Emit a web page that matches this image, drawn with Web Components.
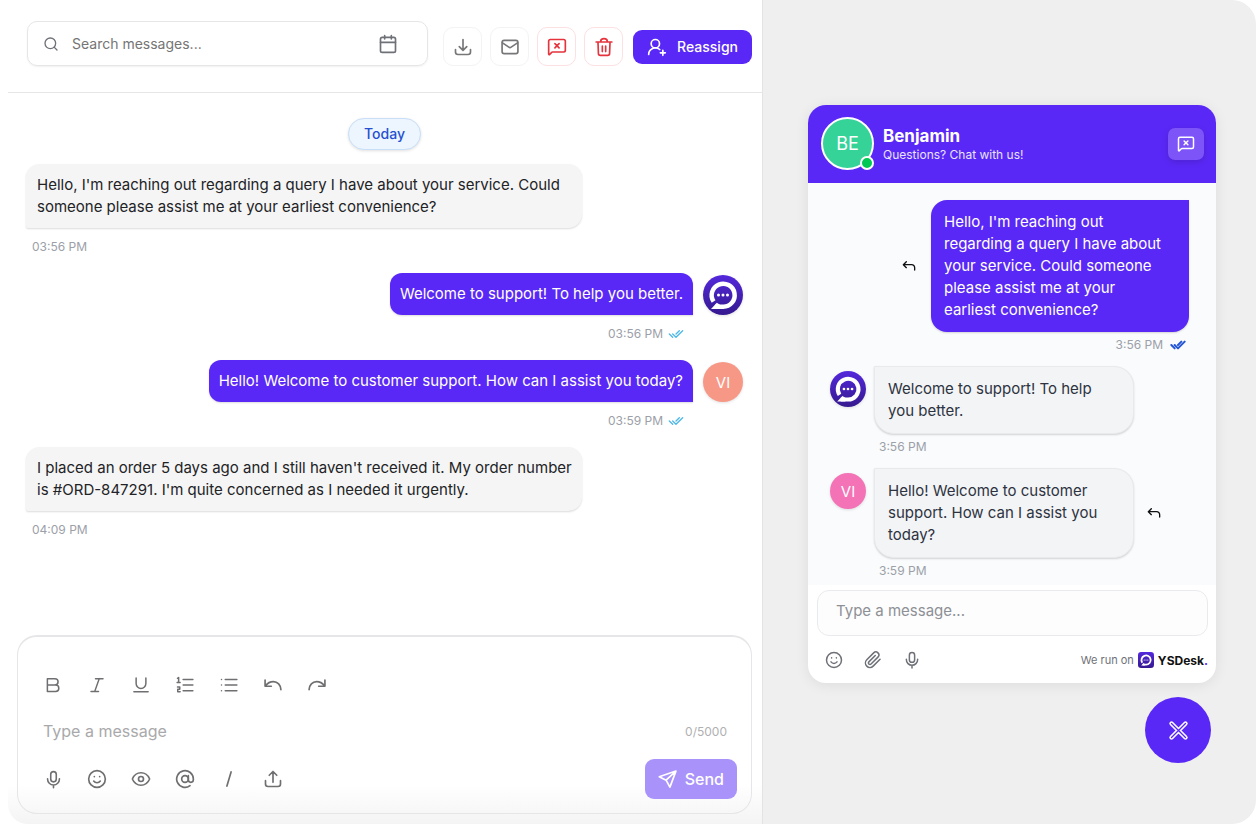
<!DOCTYPE html>
<html lang="en">
<head>
<meta charset="utf-8">
<meta name="viewport" content="width=device-width, initial-scale=1">
<title>Support chat</title>
<style>
  body {
    margin: 0;
    background: #fff;
    font-family: Inter, "Liberation Sans", sans-serif;
    --brand: #5a28f6;
    --line: #e6e6e8;
    --muted: #9ca0a8;
  }
</style>
</head>
<body>

<chat-layout>
  <inbox-panel slot="inbox">
    <inbox-toolbar slot="top"></inbox-toolbar>
    <day-label>Today</day-label>
    <inbox-message time="03:56 PM">Hello, I'm reaching out regarding a query I have about your service. Could someone please assist me at your earliest convenience?</inbox-message>
    <inbox-message sent time="03:56 PM">Welcome to support! To help you better.<chat-avatar slot="avatar" brand></chat-avatar></inbox-message>
    <inbox-message sent time="03:59 PM">Hello! Welcome to customer support. How can I assist you today?<chat-avatar slot="avatar" color="#f79886">VI</chat-avatar></inbox-message>
    <inbox-message time="04:09 PM">I placed an order 5 days ago and I still haven't received it. My order number is #ORD-847291. I'm quite concerned as I needed it urgently.</inbox-message>
    <message-composer slot="bottom"></message-composer>
  </inbox-panel>

  <chat-widget slot="widget">
    <widget-header slot="top" initials="BE" tagline="Questions? Chat with us!">Benjamin</widget-header>
    <widget-message sent reply time="3:56 PM">Hello, I'm reaching out regarding a query I have about your service. Could someone please assist me at your earliest convenience?</widget-message>
    <widget-message time="3:56 PM">Welcome to support! To help you better.<chat-avatar slot="avatar" brand size="36"></chat-avatar></widget-message>
    <widget-message reply time="3:59 PM">Hello! Welcome to customer support. How can I assist you today?<chat-avatar slot="avatar" color="#f472b6" size="36">VI</chat-avatar></widget-message>
    <widget-footer slot="bottom"></widget-footer>
  </chat-widget>
  <chat-launcher slot="widget"></chat-launcher>
</chat-layout>

<script>
const ICONS = {
  search: '<circle cx="11" cy="11" r="8"/><path d="m21 21-4.3-4.3"/>',
  calendar: '<rect x="3" y="4" width="18" height="18" rx="2"/><path d="M8 2v4M16 2v4M3 10h18"/>',
  download: '<path d="M3 15v3a3 3 0 0 0 3 3h12a3 3 0 0 0 3-3v-3M12 3v13M7.5 11.5 12 16l4.5-4.5"/>',
  mail: '<rect x="2.5" y="4" width="19" height="16" rx="2.5"/><path d="m3 7 7.6 5.2a2.5 2.5 0 0 0 2.8 0L21 7"/>',
  chatX: '<path d="M2 20.500V5a2 2 0 0 1 2-2h16a2 2 0 0 1 2 2v11a2 2 0 0 1-2 2H6.800a2 2 0 0 0-1.500.7L3.200 21c-.4.5-1.200.2-1.200-.5Z"/><path d="m9.500 8 5 5M14.500 8l-5 5"/>',
  trash: '<path d="M2.500 6h19M8 5.500C8 3.300 9.300 2 12 2s4 1.300 4 3.500M4.800 6.500l.5 13.200a2.300 2.300 0 0 0 2.300 2.300h8.800a2.300 2.300 0 0 0 2.300-2.300l.5-13.200M10 11v6.500M14 11v6.500"/>',
  userPlus: '<path d="M2 21a8 8 0 0 1 13.292-6"/><circle cx="10" cy="8" r="5"/><path d="M19 16v6M22 19h-6"/>',
  checks: '<path d="m7 12 5 5L22 7M2 12l5 5M12 12l5-5"/>',
  bold: '<path d="M4.500 3.500h10a4 4 0 0 1 0 8.500h-10zM4.500 12h11a4 4 0 0 1 0 8.500h-11z"/>',
  italic: '<path d="M10 3.500h10M4 20.500h10M15 3.500 9 20.500"/>',
  underline: '<path d="M5.500 2.500V10a6.500 6.500 0 0 0 13 0V2.500M2.500 21h19"/>',
  ordered: '<path d="M9.500 4.500H22.500M9.500 12H22.500M9.500 19.500H22.500M2 3l1.500-1v6.500M1.500 8.800h4M2 14.500h3V17.500H2.300V21H5.500"/>',
  bullets: '<path d="M7 4.500h15.500M7 12h15.500M7 19.500h15.500M2 4.500h.01M2 12h.01M2 19.500h.01"/>',
  undo: '<path d="M2.500 6v7.500H10M3 13c2.500-3.300 5.800-5 9.500-5 5 0 8.700 4 9 9.500"/>',
  redo: '<path d="M21.500 6v7.500H14M21 13c-2.500-3.300-5.800-5-9.500-5-5 0-8.700 4-9 9.500"/>',
  mic: '<rect x="8.500" y="2" width="7" height="13" rx="3.500"/><path d="M4.500 11v.5a7.500 7.500 0 0 0 15 0V11M12 19v3.500"/>',
  smile: '<circle cx="12" cy="12" r="10"/><path d="M8 14.500c1 1.300 2.400 2 4 2s3-.7 4-2M8.800 9v.3M15.200 9v.3"/>',
  eye: '<path d="M1.800 12.300a1 1 0 0 1 0-.6C3.700 7.300 7.500 4.500 12 4.500s8.300 2.800 10.200 7.200a1 1 0 0 1 0 .6c-1.900 4.400-5.700 7.200-10.200 7.200s-8.300-2.800-10.200-7.200Z"/><circle cx="12" cy="12" r="3"/>',
  at: '<circle cx="12" cy="12" r="4"/><path d="M16 8v5a3 3 0 0 0 6 0v-1a10 10 0 1 0-4 8"/>',
  slash: '<path d="M14.500 3.500 9.500 20.500"/>',
  upload: '<path d="M3 14v4a3 3 0 0 0 3 3h12a3 3 0 0 0 3-3v-4M12 16V3M7.500 7.500 12 3l4.500 4.500"/>',
  send: '<path d="M21.500 2.500 1.500 9.200l8.200 4.200 4.600 8.300zM21.500 2.500 9.700 13.400"/>',
  reply: '<path d="M8 5.500 3.500 10 8 14.500M4 10h12a4.500 4.500 0 0 1 4.500 4.500V18"/>',
  clip: '<path d="m21.400 11-9.200 9.200a6 6 0 0 1-8.500-8.500l9.200-9.200a4 4 0 0 1 5.700 5.700l-9.200 9.200a2 2 0 0 1-2.900-2.900l8.500-8.500"/>',
  close: '<path d="M4 4l16 16M20 4 4 20" stroke-width="5"/><path d="M4 4l16 16M20 4 4 20" stroke="var(--brand)" stroke-width="1.600"/>'
};

class BaseElement extends HTMLElement {
  constructor() {
    super();
    this.attachShadow({ mode: "open" });
  }

  connectedCallback() {
    this.shadowRoot.innerHTML = this.render();
  }
}

class ChatIcon extends BaseElement {
  render() {
    const size = this.getAttribute("size") || 20;
    const weight = this.getAttribute("weight") || 2;
    return `
      <style>
        :host { display: block; flex: none; }
        svg { display: block; }
      </style>
      <svg width="${size}" height="${size}" viewBox="0 0 24 24" fill="none" stroke="currentColor"
        stroke-width="${weight}" stroke-linecap="round" stroke-linejoin="round" aria-hidden="true">${ICONS[this.getAttribute("name")]}</svg>
    `;
  }
}

class BrandMark extends BaseElement {
  render() {
    const size = this.getAttribute("size") || 40;
    const corner = this.hasAttribute("square") ? 8 : 20;
    return `
      <style>
        :host { display: block; flex: none; }
        svg { display: block; }
      </style>
      <svg width="${size}" height="${size}" viewBox="0 0 40 40" aria-hidden="true">
        <defs>
          <linearGradient id="g" x1="0" y1="0" x2="0" y2="1">
            <stop offset="0" stop-color="#5428dc"/>
            <stop offset="1" stop-color="#35198f"/>
          </linearGradient>
        </defs>
        <rect width="40" height="40" rx="${corner}" fill="url(#g)"/>
        <path d="M10.600 26.600A11.500 11.500 0 1 1 20 31.700H12" fill="none" stroke="#fff" stroke-width="4.500"/>
        <path d="M8 34l5.800-6.200 3.200 2V34z" fill="#fff"/>
        <g fill="#fff"><circle cx="15.500" cy="20" r="1.500"/><circle cx="20" cy="20" r="1.500"/><circle cx="24.500" cy="20" r="1.500"/></g>
      </svg>
    `;
  }
}

class ChatAvatar extends BaseElement {
  render() {
    const size = this.getAttribute("size") || 40;
    return `
      <style>
        :host {
          display: grid;
          place-items: center;
          flex: none;
          width: ${size}px;
          height: ${size}px;
          border-radius: 50%;
          background: ${this.getAttribute("color") || "transparent"};
          color: #fff;
          font-size: 15px;
          box-shadow: 0 1px 3px rgba(0, 0, 0, 0.12);
        }
      </style>
      ${this.hasAttribute("brand") ? `<brand-mark size="${size}"></brand-mark>` : "<slot></slot>"}
    `;
  }
}

class IconButton extends BaseElement {
  render() {
    return `
      <style>
        :host { display: block; flex: none; }
        button {
          display: grid;
          place-items: center;
          width: 24px;
          height: 24px;
          padding: 0;
          border: 0;
          background: none;
          color: inherit;
          cursor: pointer;
        }
        :host([boxed]) button {
          width: 39px;
          height: 39px;
          border: 1px solid #f3f3f4;
          border-radius: 10px;
          background: #fff;
          color: #77777a;
        }
        :host([danger]) button {
          border-color: #fde0e2;
          color: #e5343d;
        }
      </style>
      <button type="button" aria-label="${this.getAttribute("label")}">
        <chat-icon name="${this.getAttribute("icon")}" size="${this.getAttribute("size") || 20}" weight="${this.getAttribute("weight") || 2}"></chat-icon>
      </button>
    `;
  }
}

class ChatLayout extends BaseElement {
  render() {
    return `
      <style>
        :host {
          display: grid;
          grid-template-columns: 755fr 493fr;
          min-height: 100vh;
          box-sizing: border-box;
          padding-left: 8px;
        }
        main {
          display: grid;
          border-right: 1px solid #e3e3e3;
          border-bottom-left-radius: 20px;
          background: linear-gradient(to top, #f4f4f4, #fff 40px);
        }
        aside {
          display: flex;
          flex-direction: column;
          gap: 14px;
          padding: 105px 40px 24px 45px;
          border-radius: 0 24px 24px 0;
          background: #efefef;
        }
      </style>
      <main><slot name="inbox"></slot></main>
      <aside><slot name="widget"></slot></aside>
    `;
  }
}

class InboxPanel extends BaseElement {
  render() {
    return `
      <style>
        :host { display: flex; flex-direction: column; min-width: 0; }
        .messages {
          display: flex;
          flex: 1;
          flex-direction: column;
          gap: 18px;
          padding: 25px 19px 18px 18px;
        }
      </style>
      <slot name="top"></slot>
      <div class="messages"><slot></slot></div>
      <slot name="bottom"></slot>
    `;
  }
}

class InboxToolbar extends BaseElement {
  render() {
    return `
      <style>
        :host {
          display: flex;
          align-items: flex-end;
          gap: 15px;
          padding: 21px 10px 26px 19px;
          border-bottom: 1px solid var(--line);
        }
        .search {
          display: flex;
          flex: 1;
          align-items: center;
          box-sizing: border-box;
          min-width: 0;
          height: 45px;
          padding: 0 27px 0 15px;
          border: 1px solid var(--line);
          border-radius: 10px;
          box-shadow: 0 1px 2px rgba(0, 0, 0, 0.06);
          color: #6f7178;
        }
        input {
          flex: 1;
          min-width: 0;
          margin-left: 13px;
          padding: 0;
          border: 0;
          outline: 0;
          background: none;
          font: 14px/20px Inter, sans-serif;
        }
        input::placeholder { color: #757575; opacity: 1; }
        .actions { display: flex; align-items: center; gap: 8px; }
        .reassign {
          display: flex;
          align-items: center;
          gap: 10px;
          height: 34px;
          margin-left: 2px;
          padding: 0 14px;
          border: 0;
          border-radius: 9px;
          background: var(--brand);
          color: #fff;
          font: 500 14px/20px Inter, sans-serif;
          cursor: pointer;
        }
      </style>
      <div class="search">
        <chat-icon name="search" size="16"></chat-icon>
        <input type="text" aria-label="Search messages" placeholder="Search messages...">
        <icon-button icon="calendar" label="Pick a date"></icon-button>
      </div>
      <div class="actions">
        <icon-button boxed icon="download" label="Download"></icon-button>
        <icon-button boxed icon="mail" label="Email"></icon-button>
        <icon-button boxed danger icon="chatX" label="Close chat"></icon-button>
        <icon-button boxed danger icon="trash" label="Delete"></icon-button>
        <button class="reassign" type="button"><chat-icon name="userPlus"></chat-icon>Reassign</button>
      </div>
    `;
  }
}

class DayLabel extends BaseElement {
  render() {
    return `
      <style>
        :host {
          align-self: center;
          padding: 5px 15px;
          margin-bottom: -4px;
          border: 1px solid #c9dff8;
          border-radius: 16px;
          background: #edf5ff;
          box-shadow: 0 1px 3px rgba(0, 0, 0, 0.12);
          color: #2550d0;
          font-size: 14px;
          font-weight: 500;
          line-height: 20px;
        }
      </style>
      <slot></slot>
    `;
  }
}

class InboxMessage extends BaseElement {
  render() {
    const sent = this.hasAttribute("sent");
    return `
      <style>
        :host { display: flex; gap: 10px; }
        :host([sent]) { justify-content: flex-end; align-items: flex-start; }
        ::slotted(chat-avatar) { margin-top: 2px; }
        .body { display: flex; flex-direction: column; gap: 11px; max-width: 556px; }
        .bubble {
          padding: 10px 4px 10px 11px;
          border-radius: 14px 14px 14px 2px;
          background: #f5f5f5;
          box-shadow: 0 1px 2px rgba(0, 0, 0, 0.14);
          color: #222326;
          font-size: 15px;
          line-height: 22px;
        }
        :host([sent]) .bubble {
          padding: 10px;
          border-radius: 12px 12px 0 12px;
          background: var(--brand);
          color: #fff;
        }
        .meta {
          display: flex;
          align-items: center;
          gap: 5px;
          padding: 0 6px;
          color: var(--muted);
          font-size: 12px;
          line-height: 16px;
        }
        :host([sent]) .meta { justify-content: flex-end; padding: 0 9px; }
        .meta chat-icon { color: #4db8e8; }
      </style>
      <div class="body">
        <div class="bubble"><slot></slot></div>
        <div class="meta"><time>${this.getAttribute("time")}</time>${sent ? '<chat-icon name="checks" size="16"></chat-icon>' : ""}</div>
      </div>
      <slot name="avatar"></slot>
    `;
  }
}

class MessageComposer extends BaseElement {
  render() {
    return `
      <style>
        :host {
          display: flex;
          flex-direction: column;
          gap: 12px;
          margin: 0 10px 10px 9px;
          padding: 36px 14px 14px 23px;
          border: 1px solid var(--line);
          border-top: 2px solid var(--line);
          border-radius: 20px;
          color: #6f6f72;
        }
        .tools { display: flex; gap: 20px; }
        .format { margin-bottom: 6px; }
        .row { display: flex; align-items: center; justify-content: space-between; }
        .entry { padding-right: 10px; }
        input {
          flex: 1;
          min-width: 0;
          height: 32px;
          padding: 0 2px;
          border: 0;
          outline: 0;
          background: none;
          font: 16px/24px Inter, sans-serif;
        }
        input::placeholder { color: #a9a9ab; opacity: 1; }
        .count { color: #b0b0b2; font-size: 12px; }
        .send {
          display: flex;
          align-items: center;
          gap: 7px;
          height: 40px;
          padding: 0 13px;
          border: 0;
          border-radius: 9px;
          background: #a993fa;
          color: #fff;
          font: 500 16px/24px Inter, sans-serif;
        }
      </style>
      <div class="tools format">
        <icon-button icon="bold" label="Bold" size="18"></icon-button>
        <icon-button icon="italic" label="Italic" size="18"></icon-button>
        <icon-button icon="underline" label="Underline" size="18"></icon-button>
        <icon-button icon="ordered" label="Numbered list" size="18"></icon-button>
        <icon-button icon="bullets" label="Bulleted list" size="18"></icon-button>
        <icon-button icon="undo" label="Undo"></icon-button>
        <icon-button icon="redo" label="Redo"></icon-button>
      </div>
      <div class="row entry">
        <input type="text" aria-label="Message" placeholder="Type a message">
        <span class="count">0/5000</span>
      </div>
      <div class="row">
        <div class="tools">
          <icon-button icon="mic" label="Record" size="19"></icon-button>
          <icon-button icon="smile" label="Emoji"></icon-button>
          <icon-button icon="eye" label="Preview"></icon-button>
          <icon-button icon="at" label="Mention"></icon-button>
          <icon-button icon="slash" label="Shortcuts"></icon-button>
          <icon-button icon="upload" label="Upload"></icon-button>
        </div>
        <button class="send" type="button"><chat-icon name="send"></chat-icon>Send</button>
      </div>
    `;
  }
}

class ChatWidget extends BaseElement {
  render() {
    return `
      <style>
        :host {
          display: flex;
          flex-direction: column;
          overflow: hidden;
          border-radius: 18px;
          background: #fff;
          box-shadow: 0 2px 14px rgba(0, 0, 0, 0.08);
        }
        .messages {
          display: flex;
          flex-direction: column;
          gap: 13px;
          padding: 17px 27px 6px 22px;
          background: #f9fbfc;
        }
      </style>
      <slot name="top"></slot>
      <div class="messages"><slot></slot></div>
      <slot name="bottom"></slot>
    `;
  }
}

class WidgetHeader extends BaseElement {
  render() {
    return `
      <style>
        :host {
          display: flex;
          align-items: center;
          gap: 9px;
          padding: 12px 12px 13px 13px;
          background: var(--brand);
          color: #fff;
        }
        .avatar {
          position: relative;
          display: grid;
          place-items: center;
          box-sizing: border-box;
          width: 53px;
          height: 53px;
          border: 2px solid #fff;
          border-radius: 50%;
          background: #36d399;
          font-size: 18px;
        }
        .status {
          position: absolute;
          right: -2px;
          bottom: -2px;
          width: 10px;
          height: 10px;
          border: 2px solid #fff;
          border-radius: 50%;
          background: #00c853;
        }
        .who { flex: 1; }
        h2 { margin: 0; font-size: 17px; font-weight: 700; line-height: 22px; }
        p { margin: 0; font-size: 12px; line-height: 16px; color: #e9e2ff; }
        button {
          display: grid;
          place-items: center;
          width: 36px;
          height: 32px;
          padding: 0;
          border: 0;
          border-radius: 7px;
          background: #7c54f8;
          box-shadow: 0 2px 6px rgba(0, 0, 0, 0.15);
          color: #fff;
        }
      </style>
      <div class="avatar">${this.getAttribute("initials")}<span class="status"></span></div>
      <div class="who">
        <h2><slot></slot></h2>
        <p>${this.getAttribute("tagline")}</p>
      </div>
      <button type="button" aria-label="Close chat"><chat-icon name="chatX" size="18"></chat-icon></button>
    `;
  }
}

class WidgetMessage extends BaseElement {
  render() {
    const sent = this.hasAttribute("sent");
    const reply = this.hasAttribute("reply")
      ? '<icon-button icon="reply" label="Reply" size="16"></icon-button>'
      : "";
    return `
      <style>
        :host {
          display: grid;
          grid-template-columns: 36px minmax(0, 260px) auto;
          gap: 5px 8px;
          justify-content: start;
        }
        :host([sent]) { grid-template-columns: auto minmax(0, 258px); gap: 5px 10px; justify-content: end; }
        ::slotted(chat-avatar) { margin-top: 5px; }
        .bubble {
          padding: 11px 13px;
          border: 1px solid #e8eaed;
          border-radius: 0 20px 20px 20px;
          background: #f3f4f6;
          box-shadow: 0 1px 2px rgba(0, 0, 0, 0.16);
          color: #2d3340;
          font-size: 15px;
          line-height: 22px;
        }
        :host([sent]) .bubble {
          padding: 11px 20px 11px 13px;
          border: 0;
          border-radius: 16px 0 16px 16px;
          background: var(--brand);
          color: #fff;
        }
        icon-button { align-self: center; color: #111; }
        .meta {
          display: flex;
          grid-column: 2;
          align-items: center;
          gap: 7px;
          padding: 0 5px;
          color: var(--muted);
          font-size: 12px;
          line-height: 16px;
        }
        :host([sent]) .meta { justify-content: flex-end; padding: 0 3px; }
        .meta chat-icon { color: #2456d6; }
      </style>
      ${sent ? reply : '<slot name="avatar"></slot>'}
      <div class="bubble"><slot></slot></div>
      ${sent ? "" : reply}
      <div class="meta"><time>${this.getAttribute("time")}</time>${sent ? '<chat-icon name="checks" size="16" weight="3"></chat-icon>' : ""}</div>
    `;
  }
}

class WidgetFooter extends BaseElement {
  render() {
    return `
      <style>
        :host { display: block; padding: 5px 8px 11px 9px; color: #6f7178; }
        input {
          display: block;
          box-sizing: border-box;
          width: 100%;
          height: 46px;
          padding: 0 18px 6px;
          border: 1px solid #e8eaed;
          border-radius: 12px;
          outline: 0;
          background: #fdfdfd;
          font: 15px/22px Inter, sans-serif;
        }
        input::placeholder { color: #8d9096; opacity: 1; }
        .row { display: flex; align-items: center; justify-content: space-between; margin-top: 12px; }
        .tools { display: flex; gap: 15px; padding-left: 5px; }
        a {
          display: flex;
          align-items: center;
          gap: 4px;
          color: #6f7178;
          font-size: 11px;
          text-decoration: none;
        }
        strong { color: #111; font-size: 12px; font-weight: 700; }
        i { color: var(--brand); font-style: normal; }
      </style>
      <input type="text" aria-label="Message" placeholder="Type a message...">
      <div class="row">
        <div class="tools">
          <icon-button icon="smile" label="Emoji" size="18"></icon-button>
          <icon-button icon="clip" label="Attach" size="18"></icon-button>
          <icon-button icon="mic" label="Record" size="18"></icon-button>
        </div>
        <a href="#">We run on <brand-mark square size="16"></brand-mark><strong>YSDesk<i>.</i></strong></a>
      </div>
    `;
  }
}

class ChatLauncher extends BaseElement {
  render() {
    return `
      <style>
        :host { display: block; align-self: flex-end; margin-right: 5px; }
        button {
          display: grid;
          place-items: center;
          width: 66px;
          height: 66px;
          padding: 0;
          border: 0;
          border-radius: 50%;
          background: var(--brand);
          color: #fff;
          cursor: pointer;
        }
      </style>
      <button type="button" aria-label="Close widget"><chat-icon name="close" size="21"></chat-icon></button>
    `;
  }
}

customElements.define("chat-icon", ChatIcon);
customElements.define("brand-mark", BrandMark);
customElements.define("chat-avatar", ChatAvatar);
customElements.define("icon-button", IconButton);
customElements.define("chat-layout", ChatLayout);
customElements.define("inbox-panel", InboxPanel);
customElements.define("inbox-toolbar", InboxToolbar);
customElements.define("day-label", DayLabel);
customElements.define("inbox-message", InboxMessage);
customElements.define("message-composer", MessageComposer);
customElements.define("chat-widget", ChatWidget);
customElements.define("widget-header", WidgetHeader);
customElements.define("widget-message", WidgetMessage);
customElements.define("widget-footer", WidgetFooter);
customElements.define("chat-launcher", ChatLauncher);
</script>
</body>
</html>
